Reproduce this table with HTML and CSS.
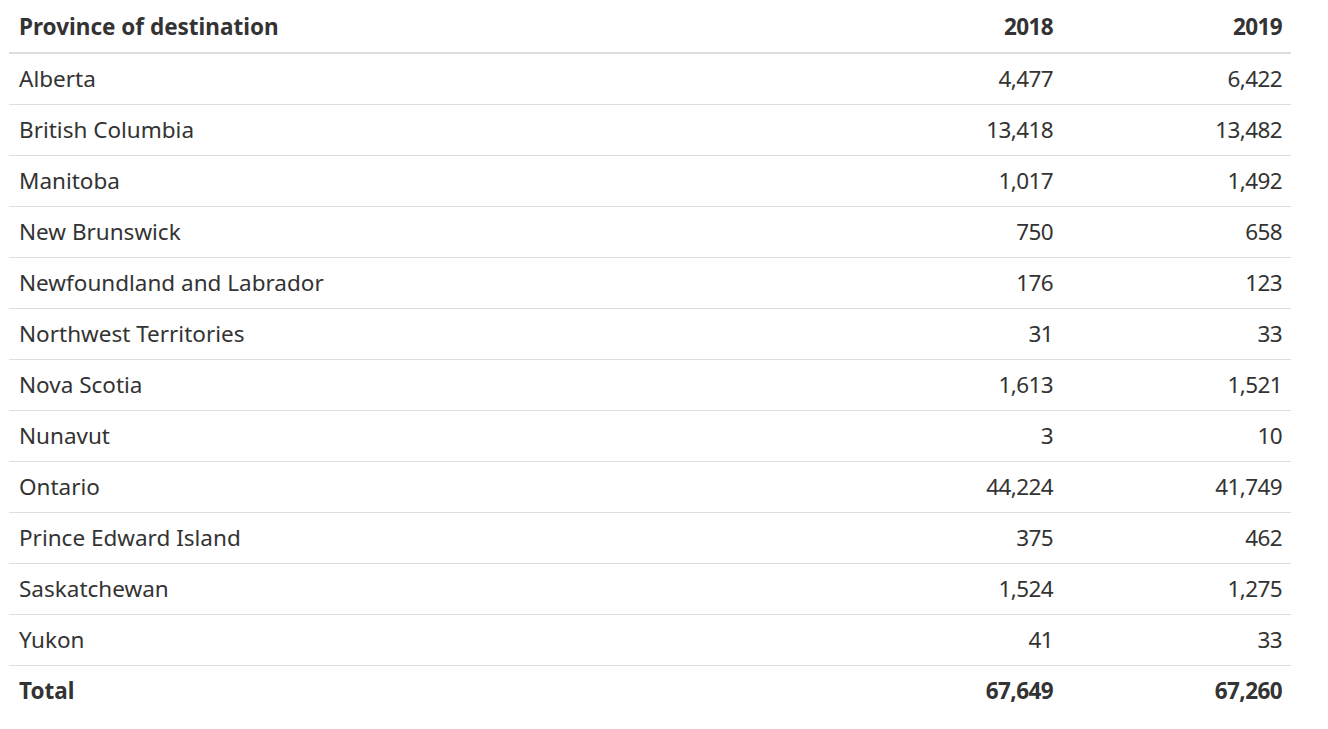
FILE: index.html
```html
<!DOCTYPE html>
<html lang="en">
<head>
<meta charset="utf-8">
<title>Province of destination</title>
<link rel="stylesheet" href="styles.css">
</head>
<body>
<div class="wrap">
<table class="data">
  <thead>
    <tr><th class="name">Province of destination</th><th class="num">2018</th><th class="num">2019</th></tr>
  </thead>
  <tbody>
    <tr><td>Alberta</td><td class="num">4,477</td><td class="num">6,422</td></tr>
    <tr><td>British Columbia</td><td class="num">13,418</td><td class="num">13,482</td></tr>
    <tr><td>Manitoba</td><td class="num">1,017</td><td class="num">1,492</td></tr>
    <tr><td>New Brunswick</td><td class="num">750</td><td class="num">658</td></tr>
    <tr><td>Newfoundland and Labrador</td><td class="num">176</td><td class="num">123</td></tr>
    <tr><td>Northwest Territories</td><td class="num">31</td><td class="num">33</td></tr>
    <tr><td>Nova Scotia</td><td class="num">1,613</td><td class="num">1,521</td></tr>
    <tr><td>Nunavut</td><td class="num">3</td><td class="num">10</td></tr>
    <tr><td>Ontario</td><td class="num">44,224</td><td class="num">41,749</td></tr>
    <tr><td>Prince Edward Island</td><td class="num">375</td><td class="num">462</td></tr>
    <tr><td>Saskatchewan</td><td class="num">1,524</td><td class="num">1,275</td></tr>
    <tr><td>Yukon</td><td class="num">41</td><td class="num">33</td></tr>
    <tr class="total"><td>Total</td><td class="num">67,649</td><td class="num">67,260</td></tr>
  </tbody>
</table>
</div>
</body>
</html>
```
FILE: styles.css
```css
html, body {
  margin: 0;
  padding: 0;
  background: #fff;
}
body {
  font-family: "Noto Sans", "Open Sans", sans-serif;
  font-size: 22.5px;
  color: #333;
}
.wrap {
  padding-left: 9px;
}
.data {
  width: 1282px;
  border-collapse: collapse;
  border-spacing: 0;
}
.data th,
.data td {
  padding: 8px 9px 8px 10px;
  text-align: left;
  vertical-align: middle;
}
.data th {
  font-weight: 700;
  line-height: 36px;
  padding-top: 9px;
  padding-bottom: 7px;
  border-bottom: 2px solid #ddd;
}
.data td {
  line-height: 34px;
  border-top: 1px solid #ddd;
}
.data tbody tr:first-child td {
  border-top: 0;
}
.data .num {
  text-align: right;
  width: 210px;
  letter-spacing: -0.6px;
}
.data .total td {
  font-weight: 700;
}
```
